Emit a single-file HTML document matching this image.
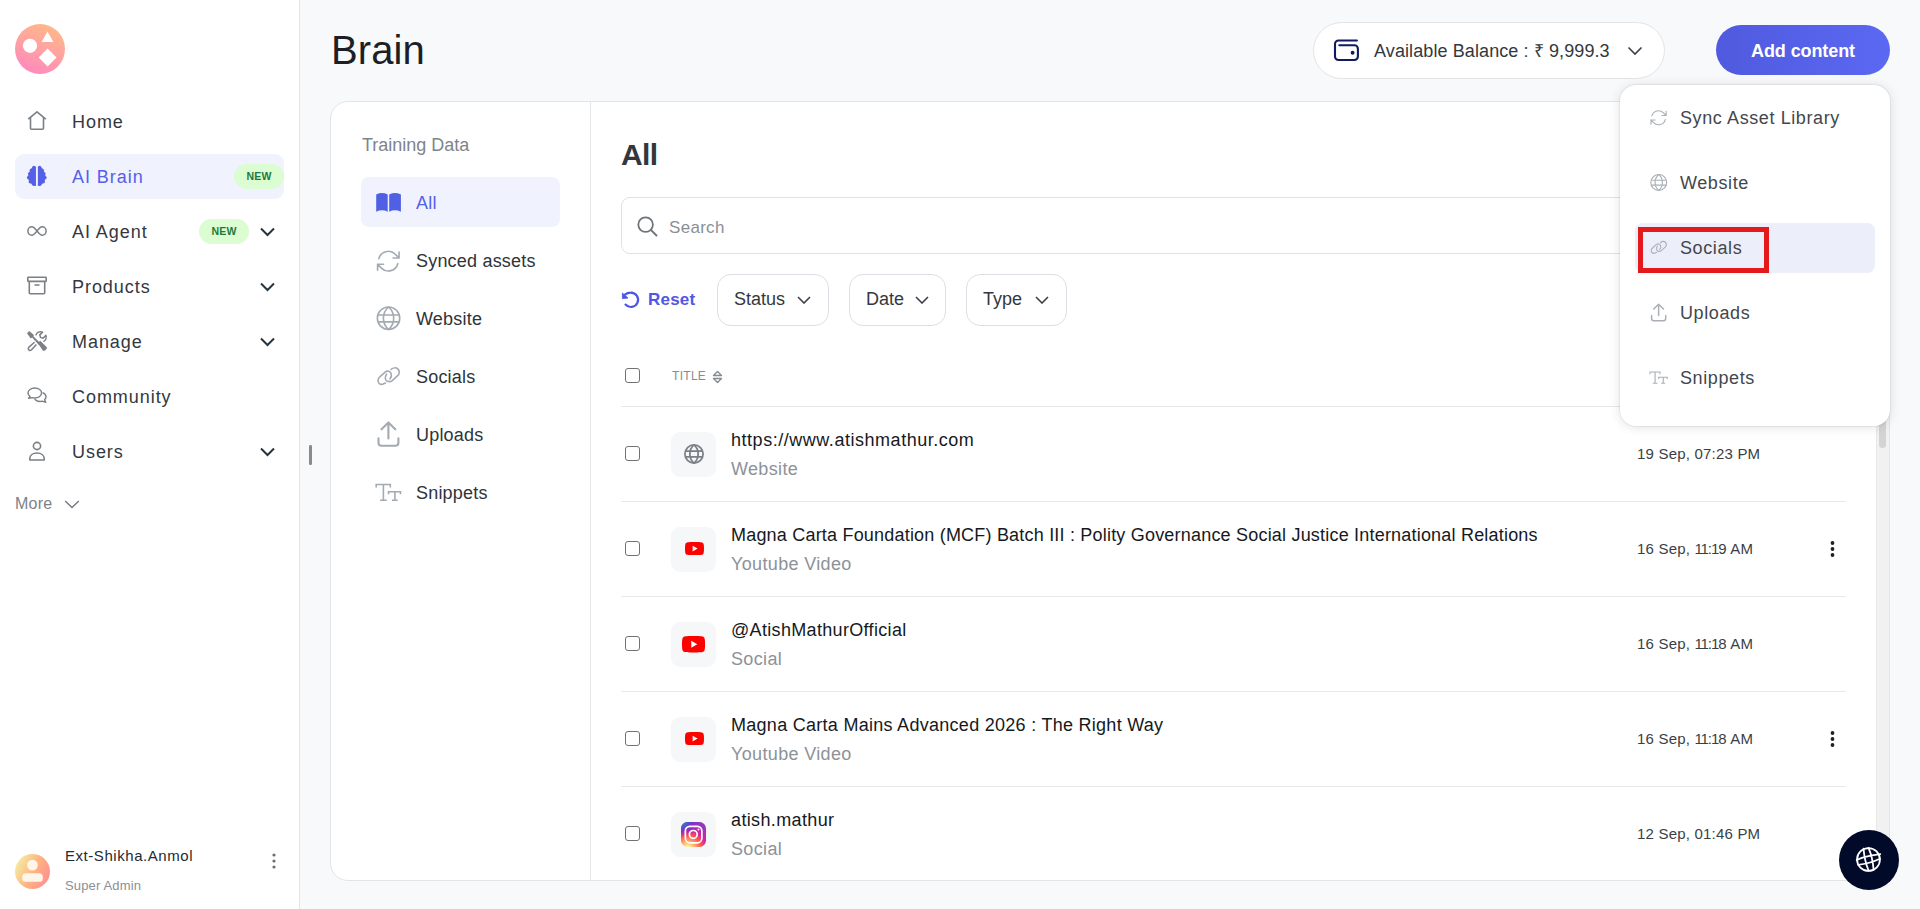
<!DOCTYPE html>
<html><head><meta charset="utf-8">
<style>
*{box-sizing:border-box;margin:0;padding:0}
html,body{width:1920px;height:909px;overflow:hidden;background:#f8f9fb;font-family:"Liberation Sans",sans-serif;color:#1f2328;position:relative}
.abs{position:absolute}
svg.abs{overflow:visible}
.sidebar{position:absolute;left:0;top:0;width:300px;height:909px;background:#fff;border-right:1px solid #e4e4e6}
.nav{position:absolute;left:15px;width:269px;height:45px;border-radius:9px}
.nav .ic{position:absolute;left:12px;top:12px;width:20px;height:20px;overflow:visible}
.nav .tx{position:absolute;left:57px;top:1px;line-height:45px;font-size:18px;color:#33383e;letter-spacing:0.95px}
.nav .chev{position:absolute;left:245px;top:18px;width:15px;height:10px}
.badge{position:absolute;height:25px;width:50px;border-radius:13px;background:#dcfcd1;color:#1b7a3c;font-size:10.5px;font-weight:bold;text-align:center;line-height:25px;letter-spacing:0.2px}
.main-title{position:absolute;left:331px;top:26px;font-size:40px;line-height:48px;color:#1e1f24;letter-spacing:0.1px}
.card{position:absolute;left:330px;top:101px;width:1560px;height:780px;background:#fff;border:1px solid #e3e4e6;border-radius:18px;overflow:hidden}
.lp{position:absolute;left:0;top:0;width:260px;height:100%;border-right:1px solid #e5e7ea}
.ti{position:absolute;left:30px;width:199px;height:50px;border-radius:8px}
.ti .tx{position:absolute;left:55px;top:1px;line-height:50px;font-size:18px;color:#2f3438;letter-spacing:0.2px}
.i32{position:absolute;width:32px;height:32px;overflow:visible}
.fbtn{position:absolute;top:274px;height:52px;border:1px solid #dcdfe3;border-radius:14px;background:#fff}
.fbtn span{position:absolute;left:16px;top:13px;font-size:18px;line-height:22px;color:#33383e}
.fchev{position:absolute;top:296px;width:14px;height:8px}
.cb{position:absolute;left:625px;width:15px;height:15px;border:1.6px solid #707274;border-radius:3px;background:#fff}
.sep{position:absolute;left:621px;width:1225px;height:1px;background:#e6e8eb}
.ibox{position:absolute;left:671px;width:45px;height:45px;border-radius:9px;background:#f6f7f9}
.rt{position:absolute;left:731px;margin-top:1px;font-size:18px;line-height:26px;color:#16191d;letter-spacing:0.2px;white-space:nowrap}
.rs{position:absolute;left:731px;margin-top:1px;font-size:18px;line-height:26px;color:#8d9298;white-space:nowrap;letter-spacing:0.35px}
.rd{position:absolute;left:1637px;margin-top:0.5px;font-size:15px;line-height:20px;color:#3a3f45;white-space:nowrap;letter-spacing:0.2px}
.keb{position:absolute;left:1830px;width:5px;height:16px}
.dic{position:absolute;left:1647px;width:22.7px;height:22.7px;overflow:visible}
.dtx{position:absolute;left:1680px;font-size:18px;line-height:24px;color:#43474c;letter-spacing:0.6px}
</style></head>
<body>
<div class="sidebar">
  <svg class="abs" style="left:15px;top:24px" width="50" height="50" viewBox="0 0 50 50">
    <defs><linearGradient id="lg" x1="0.75" y1="0" x2="0.3" y2="1"><stop offset="0" stop-color="#ffba86"/><stop offset="1" stop-color="#ff89be"/></linearGradient></defs>
    <circle cx="25" cy="25" r="25" fill="url(#lg)"/>
    <circle cx="15" cy="21.8" r="7.1" fill="#fff"/>
    <path d="M32.5 7.6 L38.4 17.9 L26.6 17.9 Z" fill="#fff"/>
    <path d="M32.6 24.6 L41.5 33.5 L32.6 42.4 L23.7 33.5 Z" fill="#fff"/>
  </svg>

  <div class="nav" style="top:99px">
    <svg class="ic" viewBox="0 0 20 20" fill="none" stroke="#7b8086" stroke-width="1.6" stroke-linejoin="round"><path d="M1.2 8.2 L10 0.8 L18.8 8.2 M3.5 6.5 V17.2 Q3.5 18.2 4.5 18.2 H15.5 Q16.5 18.2 16.5 17.2 V6.5"/></svg>
    <div class="tx">Home</div>
  </div>
  <div class="nav" style="top:154px;background:#f0f2fe">
    <svg class="abs" style="left:7px;top:6px" width="30" height="32" viewBox="0 0 852 909"><defs><clipPath id="bl"><rect x="0" y="0" width="395" height="909"/></clipPath><clipPath id="br"><rect x="445" y="0" width="407" height="909"/></clipPath></defs><g fill="#5560e6"><g clip-path="url(#bl)"><path d="M395 190 L300 200 L230 300 L180 420 L170 520 L220 640 L320 720 L395 740 Z"/><circle cx="340" cy="218" r="52"/><circle cx="268" cy="292" r="50"/><circle cx="218" cy="392" r="48"/><circle cx="196" cy="500" r="56"/><circle cx="240" cy="615" r="52"/><circle cx="335" cy="690" r="52"/></g><g clip-path="url(#br)"><g transform="translate(840 0) scale(-1 1)"><path d="M395 190 L300 200 L230 300 L180 420 L170 520 L220 640 L320 720 L395 740 Z"/><circle cx="340" cy="218" r="52"/><circle cx="268" cy="292" r="50"/><circle cx="218" cy="392" r="48"/><circle cx="196" cy="500" r="56"/><circle cx="240" cy="615" r="52"/><circle cx="335" cy="690" r="52"/></g></g></g></svg>
    <div class="tx" style="color:#5560e6">AI Brain</div>
    <div class="badge" style="left:219px;top:10px">NEW</div>
  </div>
  <div class="nav" style="top:209px">
    <svg class="ic" viewBox="0 0 20 20" fill="none" stroke="#7b8086" stroke-width="1.5"><path d="M10 10 C8 7.4 6.7 5.8 4.8 5.8 C2.6 5.8 0.9 7.7 0.9 10 C0.9 12.3 2.6 14.2 4.8 14.2 C6.7 14.2 8 12.6 10 10 C12 7.4 13.3 5.8 15.2 5.8 C17.4 5.8 19.1 7.7 19.1 10 C19.1 12.3 17.4 14.2 15.2 14.2 C13.3 14.2 12 12.6 10 10 Z"/></svg>
    <div class="tx">AI Agent</div>
    <div class="badge" style="left:184px;top:10px">NEW</div>
    <svg class="chev" viewBox="0 0 15 10" fill="none" stroke="#26343d" stroke-width="2"><path d="M1 1.5 L7.5 8 L14 1.5"/></svg>
  </div>
  <div class="nav" style="top:264px">
    <svg class="ic" viewBox="0 0 20 20" fill="none" stroke="#7b8086" stroke-width="1.6"><rect x="0.8" y="1.2" width="18.4" height="4.2" rx="0.6"/><path d="M2.3 5.4 V16.8 Q2.3 17.8 3.3 17.8 H16.7 Q17.7 17.8 17.7 16.8 V5.4 M7.5 9 H12.5"/></svg>
    <div class="tx">Products</div>
    <svg class="chev" viewBox="0 0 15 10" fill="none" stroke="#26343d" stroke-width="2"><path d="M1 1.5 L7.5 8 L14 1.5"/></svg>
  </div>
  <div class="nav" style="top:319px">
    <svg class="ic" viewBox="0 0 20 20">
      <g fill="none" stroke="#7b8086" stroke-width="1.5" stroke-linejoin="round"><path d="M7.6 11.2 L1.6 16.4 A1.9 1.9 0 0 0 4.3 19 L9.4 13.4"/><path d="M8.8 4.4 A5 5 0 0 1 15.6 1.1 L12.8 3.9 L13.6 6.4 L16.1 7.2 L18.9 4.4 A5 5 0 0 1 16.4 10.6"/></g>
      <path fill="#7b8086" d="M0 2.3 L2.2 0 L6.9 3.9 L6.4 5.2 L13.6 12.5 L11.9 14 L5.1 6.6 L3.7 7.6 Z"/>
      <path fill="#7b8086" d="M10.7 12.1 L13.2 9.8 L19.6 15.9 Q20.4 16.9 19.6 17.9 L17.8 19.6 Q16.8 20.4 15.8 19.6 Z"/>
    </svg>
    <div class="tx">Manage</div>
    <svg class="chev" viewBox="0 0 15 10" fill="none" stroke="#26343d" stroke-width="2"><path d="M1 1.5 L7.5 8 L14 1.5"/></svg>
  </div>
  <div class="nav" style="top:374px">
    <svg class="ic" viewBox="0 0 20 20" fill="none" stroke="#7b8086" stroke-width="1.4" stroke-linejoin="round"><path d="M7.8 2 C4 2 1 4.2 1 7 C1 8.4 1.8 9.6 3 10.5 L1.6 12.2 L5.6 11.6 C6.3 11.8 7 11.9 7.8 11.9 C11.6 11.9 14.6 9.7 14.6 7 C14.6 4.2 11.6 2 7.8 2 Z"/><path d="M15.6 6.6 C17.8 7.4 19 9 19 10.8 C19 12 18.5 13 17.6 13.8 L18.8 16.4 L15.2 15.2 C14.5 15.4 13.8 15.5 13 15.5 C10.4 15.5 8.3 14.3 7.6 12.6"/></svg>
    <div class="tx">Community</div>
  </div>
  <div class="nav" style="top:429px">
    <svg class="ic" viewBox="0 0 20 20" fill="none" stroke="#7b8086" stroke-width="1.6"><circle cx="10" cy="5" r="3.6"/><path d="M2.8 19 V17.6 C2.8 14.2 6 12 10 12 C14 12 17.2 14.2 17.2 17.6 V19 Z" stroke-linejoin="round"/></svg>
    <div class="tx">Users</div>
    <svg class="chev" viewBox="0 0 15 10" fill="none" stroke="#26343d" stroke-width="2"><path d="M1 1.5 L7.5 8 L14 1.5"/></svg>
  </div>
  <div class="abs" style="left:15px;top:493.5px;font-size:16px;line-height:20px;color:#7d8288;letter-spacing:0.2px">More</div>
  <svg class="abs" style="left:64px;top:500px" width="16" height="9" viewBox="0 0 16 9" fill="none" stroke="#74797f" stroke-width="1.4"><path d="M1.2 1 L8 7.6 L14.8 1"/></svg>

  <svg class="abs" style="left:15px;top:854px" width="35" height="35" viewBox="0 0 35 35">
    <defs><linearGradient id="av" x1="0" y1="0.25" x2="1" y2="0.75"><stop offset="0" stop-color="#f3efa2"/><stop offset="0.5" stop-color="#ffb582"/><stop offset="1" stop-color="#ff8d92"/></linearGradient></defs>
    <circle cx="17.5" cy="17.5" r="17.5" fill="url(#av)"/>
    <circle cx="17.4" cy="11.1" r="5.4" fill="#fff6ea"/>
    <path d="M7.1 23.5 Q7.1 19.2 11.5 19.2 H23.5 Q27.9 19.2 27.9 23.5 L27.6 25.8 Q27.4 27.8 25.4 27.8 H9.6 Q7.6 27.8 7.4 25.8 Z" fill="#fff6ea"/>
  </svg>
  <div class="abs" style="left:65px;top:846px;font-size:15px;line-height:20px;color:#262a30;letter-spacing:0.55px">Ext-Shikha.Anmol</div>
  <div class="abs" style="left:65px;top:877px;font-size:13px;line-height:18px;color:#8a8f95;letter-spacing:0.15px">Super Admin</div>
  <svg class="abs" style="left:271px;top:852px" width="6" height="18" viewBox="0 0 6 18"><g fill="#6b7077"><circle cx="3" cy="3" r="1.6"/><circle cx="3" cy="9" r="1.6"/><circle cx="3" cy="15" r="1.6"/></g></svg>
</div>
<div class="abs" style="left:309px;top:445px;width:2.6px;height:20px;background:#8a8a8a;border-radius:1.3px"></div>
<div class="main-title">Brain</div>

<div class="abs" style="left:1313px;top:22px;width:352px;height:57px;border:1px solid #e2e4e8;border-radius:29px;background:#fff"></div>
<svg class="abs" style="left:1328px;top:34px" width="36" height="32" viewBox="0 0 36 32" fill="none" stroke="#0f1b5e" stroke-width="2.1" stroke-linecap="round"><path d="M28.9 6.5 H10.6 A3.6 3.6 0 0 0 7 10.1 V22.5 A3.5 3.5 0 0 0 10.5 26 H26.4 A3.5 3.5 0 0 0 29.9 22.5 V14.8 A3.5 3.5 0 0 0 26.4 11.3 H11.3"/><circle cx="24.6" cy="18.7" r="0.9" fill="#0f1b5e"/></svg>
<div class="abs" style="left:1374px;top:39px;font-size:18px;line-height:24px;color:#33383e;letter-spacing:0.1px">Available Balance : ₹ 9,999.3</div>
<svg class="abs" style="left:1627px;top:46px" width="16" height="10" viewBox="0 0 16 10" fill="none" stroke="#3b4047" stroke-width="1.6"><path d="M1.5 1.5 L8 8 L14.5 1.5"/></svg>

<div class="abs" style="left:1716px;top:25px;width:174px;height:50px;border-radius:25px;background:linear-gradient(90deg,#4f5ade,#5b68f2)"></div>
<div class="abs" style="left:1716px;top:26px;width:174px;height:50px;color:#fff;font-weight:bold;font-size:18px;line-height:50px;text-align:center;letter-spacing:-0.1px">Add content</div>

<div class="card">
  <div class="lp">
    <div class="abs" style="left:31px;top:32px;font-size:18px;line-height:22px;color:#7f848a">Training Data</div>
    <div class="ti" style="top:75px;background:#f0f2fe"><div class="tx" style="color:#5560e6">All</div></div>
    <div class="ti" style="top:133px"><div class="tx">Synced assets</div></div>
    <div class="ti" style="top:191px"><div class="tx">Website</div></div>
    <div class="ti" style="top:249px"><div class="tx">Socials</div></div>
    <div class="ti" style="top:307px"><div class="tx">Uploads</div></div>
    <div class="ti" style="top:365px"><div class="tx">Snippets</div></div>
  </div>
</div>
<svg class="i32" style="left:372px;top:186px" viewBox="0 0 32 32"><path fill="#5060e4" d="M4.2 8.4 Q10 5.6 15.7 8.4 V25.7 Q10 22.9 4.2 25.7 Z M17.2 8.4 Q23 5.6 28.9 8.4 V25.7 Q23 22.9 17.2 25.7 Z"/></svg>
<svg class="i32" style="left:372px;top:246px" viewBox="0 0 32 32"><g transform="translate(2.04 0.87) scale(1.19)" fill="none" stroke="#a4aab1" stroke-width="1.35" stroke-linecap="round" stroke-linejoin="round"><path d="M16.023 9.348h4.992v-.001M2.985 19.644v-4.992m0 0h4.992m-4.993 0 3.181 3.183a8.25 8.25 0 0 0 13.803-3.7M4.031 9.865a8.25 8.25 0 0 1 13.803-3.7l3.181 3.182m0-4.991v4.99"/></g></svg>
<svg class="i32" style="left:372px;top:302px" viewBox="0 0 32 32" fill="none" stroke="#a4aab1" stroke-width="1.6"><circle cx="16.55" cy="16.2" r="11.2"/><path d="M16.55 5 A14.75 14.75 0 0 0 16.55 27.4 A14.75 14.75 0 0 0 16.55 5 M5.8 13 H27.3 M5.8 19.9 H27.3"/></svg>
<svg class="i32" style="left:372px;top:360px" viewBox="0 0 32 32"><g transform="scale(0.0352)" fill="none" stroke="#a4aab1" stroke-width="45" stroke-linecap="round"><path d="M385 655 L300 688 C230 712 165 650 170 580 C172 530 200 495 230 470 L380 335 C440 295 520 320 545 390 C560 440 545 500 510 540"/><path d="M540 265 C600 215 690 210 740 260 C790 310 785 400 730 445 L575 585 C520 630 430 625 395 570 C370 530 380 460 415 400"/></g></svg>
<svg class="i32" style="left:372px;top:418px" viewBox="0 0 32 32" fill="none" stroke="#a4aab1" stroke-width="2.1" stroke-linecap="round" stroke-linejoin="round"><path d="M16.4 20.4 V4.8 M9.5 11.3 L16.4 4.6 L23.3 11.3 M6.5 20.4 V24.8 Q6.5 27.8 9.5 27.8 H23.4 Q26.4 27.8 26.4 24.8 V20.4"/></svg>
<svg class="i32" style="left:372px;top:476px" viewBox="0 0 32 32" fill="none" stroke="#a4aab1" stroke-width="1.6"><path d="M4.2 11.6 V8.45 H18.3 V11.6 M11.4 8.45 V24.3 M8.1 24.3 H14.8 M16.5 18.3 V15.8 H28.5 V18.3 M22.9 15.8 V24.3 M20 24.3 H25.7"/></svg>
<!-- main panel -->
<div class="abs" style="left:621px;top:136.5px;font-size:30px;line-height:36px;font-weight:bold;color:#33373c;letter-spacing:-0.6px">All</div>
<div class="abs" style="left:621px;top:197px;width:1240px;height:57px;border:1px solid #dfe1e5;border-radius:9px;background:#fff"></div>
<svg class="abs" style="left:637px;top:216px" width="21" height="21" viewBox="0 0 21 21" fill="none" stroke="#6f747a" stroke-width="1.8" stroke-linecap="round"><circle cx="8.6" cy="8.6" r="7.3"/><path d="M14 14 L19.5 19.5"/></svg>
<div class="abs" style="left:669px;top:217px;font-size:17px;line-height:22px;color:#8a8f96;letter-spacing:0.3px">Search</div>

<svg class="abs" style="left:616px;top:286px" width="28" height="28" viewBox="0 0 28 28"><path d="M8.9 8.6 Q11.5 6.6 14.6 6.6 A7.2 7.2 0 1 1 9.5 18.6" fill="none" stroke="#4a55e8" stroke-width="2.2" stroke-linecap="round"/><path d="M6.4 7 L6.4 12.6 L12 12.1 Z" fill="#4a55e8" stroke="#4a55e8" stroke-width="0.8" stroke-linejoin="round"/></svg>
<div class="abs" style="left:648px;top:289px;font-size:17px;line-height:22px;font-weight:bold;color:#5058e5;letter-spacing:0.2px">Reset</div>

<div class="fbtn" style="left:717px;width:112px"><span>Status</span></div>
<svg class="fchev" style="left:797px" viewBox="0 0 14 8" fill="none" stroke="#3b4047" stroke-width="1.6"><path d="M1 1 L7 7 L13 1"/></svg>
<div class="fbtn" style="left:849px;width:97px"><span>Date</span></div>
<svg class="fchev" style="left:915px" viewBox="0 0 14 8" fill="none" stroke="#3b4047" stroke-width="1.6"><path d="M1 1 L7 7 L13 1"/></svg>
<div class="fbtn" style="left:966px;width:101px"><span>Type</span></div>
<svg class="fchev" style="left:1035px" viewBox="0 0 14 8" fill="none" stroke="#3b4047" stroke-width="1.6"><path d="M1 1 L7 7 L13 1"/></svg>

<div class="cb" style="top:368px"></div>
<div class="abs" style="left:672px;top:368px;font-size:12px;line-height:16px;color:#868b92;letter-spacing:0.3px">TITLE</div>
<svg class="abs" style="left:712px;top:370px" width="11" height="14" viewBox="0 0 11 14" fill="none" stroke="#868b92" stroke-width="1.4" stroke-linejoin="round"><path d="M1.5 5.5 L5.5 1.5 L9.5 5.5 Z M1.5 8.5 L5.5 12.5 L9.5 8.5 Z"/></svg>
<div class="sep" style="top:406px"></div>

<!-- row 1 -->
<div class="cb" style="top:446px"></div>
<div class="ibox" style="top:432px"></div>
<svg class="abs" style="left:674px;top:434px" width="40" height="40" viewBox="0 0 40 40" fill="none" stroke="#7b8086" stroke-width="1.75"><circle cx="20" cy="20" r="9.1"/><path d="M20 10.9 A12 12 0 0 0 20 29.1 A12 12 0 0 0 20 10.9 M11.3 17.1 H28.7 M11.3 22.8 H28.7"/></svg>
<div class="rt" style="top:426px;letter-spacing:0.53px">https://www.atishmathur.com</div>
<div class="rs" style="top:455px">Website</div>
<div class="rd" style="top:443px">19 Sep, 07:23 PM</div>
<div class="sep" style="top:501px"></div>

<!-- row 2 -->
<div class="cb" style="top:541px"></div>
<div class="ibox" style="top:527px"><svg style="position:absolute;left:13.5px;top:15.3px" width="19" height="13.2" viewBox="0 0 28 20" preserveAspectRatio="none"><path d="M27.4 3.1 C27.1 1.9 26.1 0.9 24.9 0.6 C22.7 0 14 0 14 0 C14 0 5.3 0 3.1 0.6 C1.9 0.9 0.9 1.9 0.6 3.1 C0 5.3 0 10 0 10 C0 10 0 14.7 0.6 16.9 C0.9 18.1 1.9 19.1 3.1 19.4 C5.3 20 14 20 14 20 C14 20 22.7 20 24.9 19.4 C26.1 19.1 27.1 18.1 27.4 16.9 C28 14.7 28 10 28 10 C28 10 28 5.3 27.4 3.1 Z" fill="#ff0000"/><path d="M11.2 14.3 L18.5 10 L11.2 5.7 Z" fill="#fff"/></svg></div>
<div class="rt" style="top:521px">Magna Carta Foundation (MCF) Batch III : Polity Governance Social Justice International Relations</div>
<div class="rs" style="top:550px">Youtube Video</div>
<div class="rd" style="top:538px">16 Sep, <span style="letter-spacing:-1.1px">11:1</span>9 AM</div>
<svg class="keb" style="top:541px" viewBox="0 0 5 16"><g fill="#1f2328"><circle cx="2.5" cy="2" r="1.9"/><circle cx="2.5" cy="8" r="1.9"/><circle cx="2.5" cy="14" r="1.9"/></g></svg>
<div class="sep" style="top:596px"></div>

<!-- row 3 -->
<div class="cb" style="top:636px"></div>
<div class="ibox" style="top:622px"><svg style="position:absolute;left:10.8px;top:14.2px" width="23.1" height="16.5" viewBox="0 0 28 20" preserveAspectRatio="none"><path d="M27.4 3.1 C27.1 1.9 26.1 0.9 24.9 0.6 C22.7 0 14 0 14 0 C14 0 5.3 0 3.1 0.6 C1.9 0.9 0.9 1.9 0.6 3.1 C0 5.3 0 10 0 10 C0 10 0 14.7 0.6 16.9 C0.9 18.1 1.9 19.1 3.1 19.4 C5.3 20 14 20 14 20 C14 20 22.7 20 24.9 19.4 C26.1 19.1 27.1 18.1 27.4 16.9 C28 14.7 28 10 28 10 C28 10 28 5.3 27.4 3.1 Z" fill="#ff0000"/><path d="M11.2 14.3 L18.5 10 L11.2 5.7 Z" fill="#fff"/></svg></div>
<div class="rt" style="top:616px;letter-spacing:0.33px">@AtishMathurOfficial</div>
<div class="rs" style="top:645px">Social</div>
<div class="rd" style="top:633px">16 Sep, <span style="letter-spacing:-1.1px">11:1</span>8 AM</div>
<div class="sep" style="top:691px"></div>

<!-- row 4 -->
<div class="cb" style="top:731px"></div>
<div class="ibox" style="top:717px"><svg style="position:absolute;left:13.5px;top:15.3px" width="19" height="13.2" viewBox="0 0 28 20" preserveAspectRatio="none"><path d="M27.4 3.1 C27.1 1.9 26.1 0.9 24.9 0.6 C22.7 0 14 0 14 0 C14 0 5.3 0 3.1 0.6 C1.9 0.9 0.9 1.9 0.6 3.1 C0 5.3 0 10 0 10 C0 10 0 14.7 0.6 16.9 C0.9 18.1 1.9 19.1 3.1 19.4 C5.3 20 14 20 14 20 C14 20 22.7 20 24.9 19.4 C26.1 19.1 27.1 18.1 27.4 16.9 C28 14.7 28 10 28 10 C28 10 28 5.3 27.4 3.1 Z" fill="#ff0000"/><path d="M11.2 14.3 L18.5 10 L11.2 5.7 Z" fill="#fff"/></svg></div>
<div class="rt" style="top:711px;letter-spacing:0.28px">Magna Carta Mains Advanced 2026 : The Right Way</div>
<div class="rs" style="top:740px">Youtube Video</div>
<div class="rd" style="top:728px">16 Sep, <span style="letter-spacing:-1.1px">11:1</span>8 AM</div>
<svg class="keb" style="top:731px" viewBox="0 0 5 16"><g fill="#1f2328"><circle cx="2.5" cy="2" r="1.9"/><circle cx="2.5" cy="8" r="1.9"/><circle cx="2.5" cy="14" r="1.9"/></g></svg>
<div class="sep" style="top:786px"></div>

<!-- row 5 -->
<div class="cb" style="top:826px"></div>
<div class="ibox" style="top:812px"><svg style="position:absolute;left:10px;top:9.8px" width="25" height="25" viewBox="0 0 25 25">
  <defs><radialGradient id="ig" cx="0.27" cy="1.08" r="1.2"><stop offset="0" stop-color="#fdf497"/><stop offset="0.08" stop-color="#fdf497"/><stop offset="0.45" stop-color="#fd5949"/><stop offset="0.62" stop-color="#d6249f"/><stop offset="0.95" stop-color="#8a3ac0"/></radialGradient><radialGradient id="ig2" cx="0.08" cy="0.02" r="0.6"><stop offset="0" stop-color="#3771c8"/><stop offset="0.15" stop-color="#3771c8"/><stop offset="1" stop-color="#6600ff" stop-opacity="0"/></radialGradient></defs>
  <rect x="0" y="0" width="25" height="25" rx="6.5" fill="url(#ig)"/><rect x="0" y="0" width="25" height="25" rx="6.5" fill="url(#ig2)"/>
  <rect x="4.35" y="4.35" width="16.5" height="16.5" rx="4.6" fill="none" stroke="#fff" stroke-width="1.7"/>
  <circle cx="12.3" cy="12.4" r="3.9" fill="none" stroke="#fff" stroke-width="1.7"/>
  <circle cx="17.5" cy="7.5" r="0.95" fill="#fff"/>
</svg></div>
<div class="rt" style="top:806px;letter-spacing:0.37px">atish.mathur</div>
<div class="rs" style="top:835px">Social</div>
<div class="rd" style="top:823px">12 Sep, 01:46 PM</div>

<!-- scrollbar -->
<div class="abs" style="left:1876px;top:102px;width:13px;height:778px;background:#f1f1f1;border-left:1px solid #e8e8e8"></div>
<div class="abs" style="left:1879px;top:405px;width:7px;height:43px;background:#d4d4d4;border-radius:4px"></div>
<div class="abs" style="left:1620px;top:85px;width:270px;height:341px;background:#fff;border-radius:16px;box-shadow:0 0 0 1px rgba(0,0,0,0.05),0 1px 12px rgba(0,0,0,0.12)"></div>
<div class="abs" style="left:1635px;top:223px;width:240px;height:50px;background:#eceefa;border-radius:8px"></div>
<svg class="dic" style="top:107.2px" viewBox="0 0 32 32"><g transform="translate(2.04 0.87) scale(1.19)" fill="none" stroke="#aab0b6" stroke-width="1.35" stroke-linecap="round" stroke-linejoin="round"><path d="M16.023 9.348h4.992v-.001M2.985 19.644v-4.992m0 0h4.992m-4.993 0 3.181 3.183a8.25 8.25 0 0 0 13.803-3.7M4.031 9.865a8.25 8.25 0 0 1 13.803-3.7l3.181 3.182m0-4.991v4.99"/></g></svg>
<div class="dtx" style="top:106px">Sync Asset Library</div>
<svg class="dic" style="top:170.9px" viewBox="0 0 32 32" fill="none" stroke="#aab0b6" stroke-width="1.6"><circle cx="16.55" cy="16.2" r="11.2"/><path d="M16.55 5 A14.75 14.75 0 0 0 16.55 27.4 A14.75 14.75 0 0 0 16.55 5 M5.8 13 H27.3 M5.8 19.9 H27.3"/></svg>
<div class="dtx" style="top:171px">Website</div>
<svg class="dic" style="top:235.9px" viewBox="0 0 32 32"><g transform="scale(0.0352)" fill="none" stroke="#aab0b6" stroke-width="45" stroke-linecap="round"><path d="M385 655 L300 688 C230 712 165 650 170 580 C172 530 200 495 230 470 L380 335 C440 295 520 320 545 390 C560 440 545 500 510 540"/><path d="M540 265 C600 215 690 210 740 260 C790 310 785 400 730 445 L575 585 C520 630 430 625 395 570 C370 530 380 460 415 400"/></g></svg>
<div class="dtx" style="top:236px">Socials</div>
<svg class="dic" style="top:300.9px" viewBox="0 0 32 32" fill="none" stroke="#aab0b6" stroke-width="2.1" stroke-linecap="round" stroke-linejoin="round"><path d="M16.4 20.4 V4.8 M9.5 11.3 L16.4 4.6 L23.3 11.3 M6.5 20.4 V24.8 Q6.5 27.8 9.5 27.8 H23.4 Q26.4 27.8 26.4 24.8 V20.4"/></svg>
<div class="dtx" style="top:301px">Uploads</div>
<svg class="dic" style="top:365.9px" viewBox="0 0 32 32" fill="none" stroke="#aab0b6" stroke-width="1.6"><path d="M4.2 11.6 V8.45 H18.3 V11.6 M11.4 8.45 V24.3 M8.1 24.3 H14.8 M16.5 18.3 V15.8 H28.5 V18.3 M22.9 15.8 V24.3 M20 24.3 H25.7"/></svg>
<div class="dtx" style="top:366px">Snippets</div>
<div class="abs" style="left:1638px;top:227px;width:131px;height:46px;border:5px solid #e3191c"></div>

<div class="abs" style="left:1839px;top:830px;width:60px;height:60px;border-radius:30px;background:#020a2a"></div>
<svg class="abs" style="left:1853px;top:844px" width="32" height="32" viewBox="0 0 909 909" fill="none" stroke="#fff" stroke-width="50" stroke-linejoin="round" stroke-linecap="round"><circle cx="440" cy="440" r="325"/><path d="M300 130 Q320 450 445 760 M440 108 Q560 380 585 735 M105 455 Q380 330 775 290 M140 590 Q470 560 765 420"/></svg>
</body></html>
